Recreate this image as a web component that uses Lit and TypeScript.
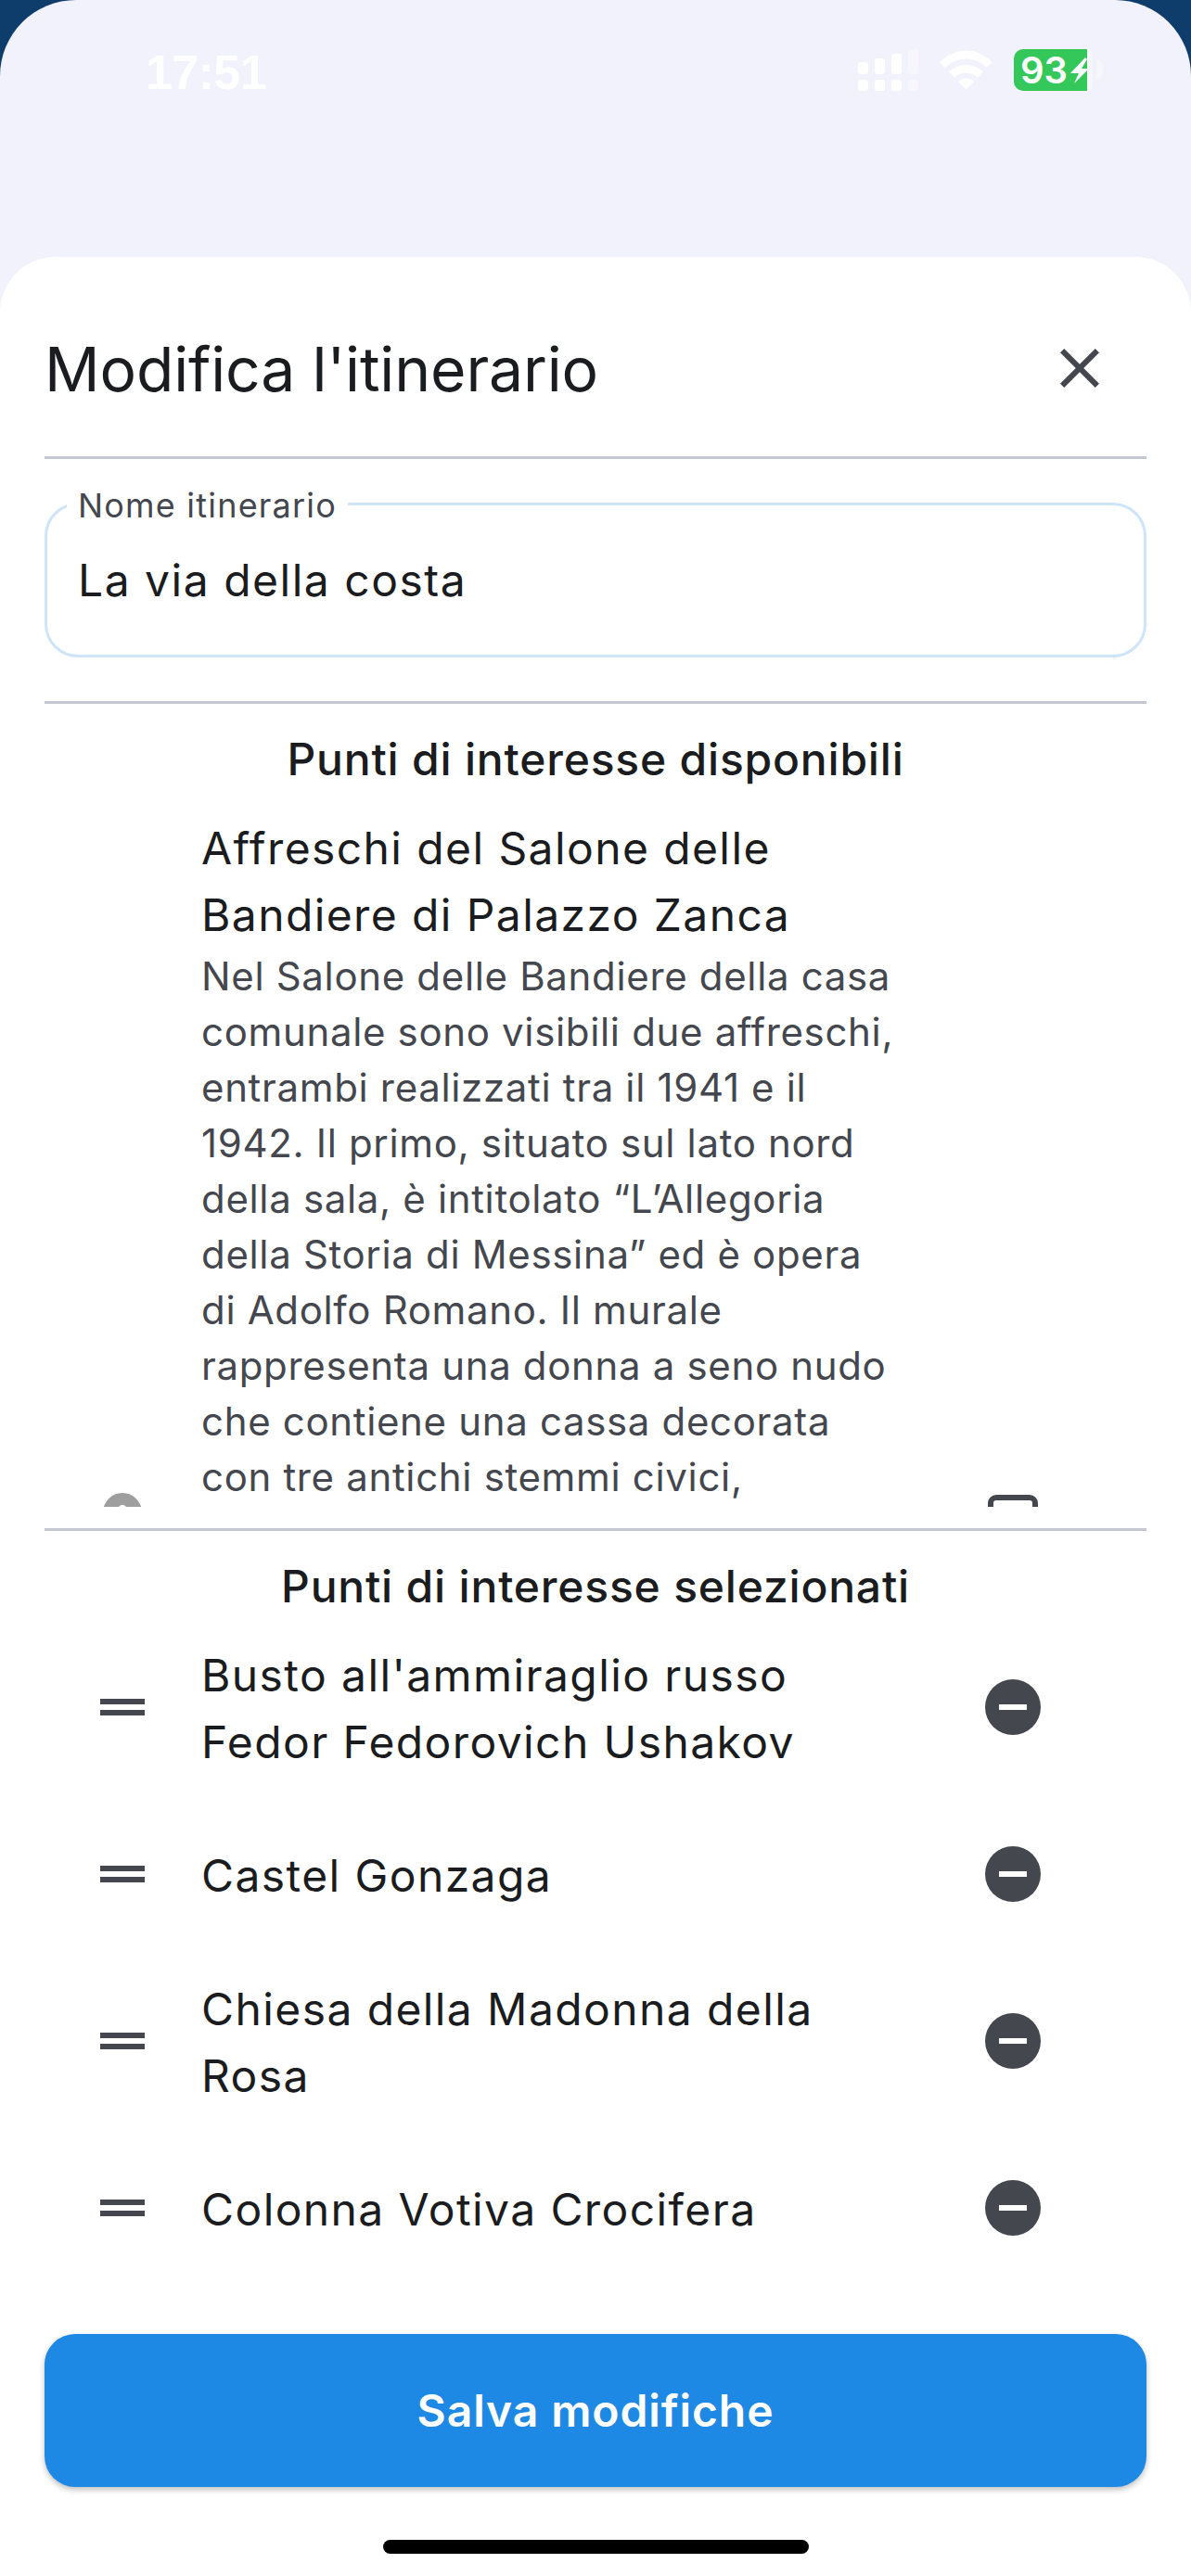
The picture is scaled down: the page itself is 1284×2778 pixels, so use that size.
import { LitElement, html, css, svg } from "lit";
import { customElement } from "lit/decorators.js";

const closeIcon = html`<svg class="close" viewBox="0 0 24 24"><path d="M19 6.41 17.59 5 12 10.59 6.41 5 5 6.41 10.59 12 5 17.59 6.41 19 12 13.41 17.59 19 19 17.59 13.41 12z" fill="#44474e"/></svg>`;
const handle = html`<svg class="icon" viewBox="0 0 60 60"><path d="M6 21h48v6H6zM6 33h48v6H6z" fill="#44474e"/></svg>`;
const minus = html`<svg class="icon" viewBox="0 0 60 60"><circle cx="30" cy="30" r="30" fill="#44474e"/><rect x="15" y="27" width="30" height="6" fill="#fff"/></svg>`;

const selected = [
  "Busto all'ammiraglio russo Fedor Fedorovich Ushakov",
  "Castel Gonzaga",
  "Chiesa della Madonna della Rosa",
  "Colonna Votiva Crocifera",
];

@customElement("app-root")
export class AppRoot extends LitElement {
  static styles = css`
    :host { display: block; width: 1284px; height: 2778px; background: #0f3d6b; font-family: Inter, "Liberation Sans", sans-serif; }
    .frame { position: relative; height: 2778px; background: #f1f2fb; border-radius: 82px 82px 0 0; overflow: hidden; display: flex; flex-direction: column; }
    .status { height: 277px; flex: none; position: relative; box-sizing: border-box; }
    .time { position: absolute; left: 157px; top: 48px; font-size: 52px; line-height: 60px; font-weight: 700; letter-spacing: -.6px; color: #fff; font-family: "Liberation Sans", sans-serif; opacity: .95; }
    .status svg { position: absolute; left: 920px; top: 48px; }
    .sheet { flex: 1; background: #fff; border-radius: 60px 60px 0 0; padding: 0 48px; display: flex; flex-direction: column; }
    .head { height: 215px; flex: none; display: flex; align-items: center; justify-content: space-between; box-sizing: border-box; padding-top: 25px; }
    .head h1 { margin: 2px 0 0; font-size: 66px; line-height: 84px; font-weight: 400; letter-spacing: -.15px; color: #1a1c20; }
    .close { width: 72px; height: 72px; margin-right: 36px; flex: none; }
    .rule { height: 3px; background: #c4c6d0; flex: none; }
    .field { position: relative; height: 167px; margin: 47px 0; box-sizing: border-box; border: 3px solid #cde4f9; border-radius: 36px; display: flex; align-items: center; padding-left: 33px; font-size: 48px; letter-spacing: 1.5px; color: #1a1c20; flex: none; }
    .field label { position: absolute; left: 21px; top: -24px; padding: 0 12px; background: #fff; font-size: 36px; line-height: 48px; letter-spacing: 1.2px; color: #44474e; }
    h2 { margin: 24px 0 0; font-size: 48px; line-height: 72px; font-weight: 500; letter-spacing: .8px; text-align: center; color: #1a1c20; flex: none; }
    .scroll { height: 770px; overflow: hidden; flex: none; margin-bottom: 23px; }
    .row { display: flex; align-items: center; padding: 24px 0; min-height: 168px; box-sizing: border-box; }
    .row.first { align-items: flex-start; }
    .icon { width: 60px; height: 60px; flex: none; }
    .lead { margin-left: 54px; margin-right: 55px; }
    .trail { margin-left: auto; margin-right: 114px; }
    .body { width: 755px; font-size: 48px; line-height: 72px; letter-spacing: 1.4px; color: #1a1c20; flex: none; }
    .list .body { padding-top: 2px; margin-bottom: -2px; }
    .desc { font-size: 42px; line-height: 60px; letter-spacing: .66px; color: #44474e; }
    .pin { margin-top: 731px; }
    .list { flex: none; margin-top: -2px; }
    .save { margin-top: 52px; height: 165px; border-radius: 33px; background: #1e88e5; color: #fff; font-size: 48px; font-weight: 600; letter-spacing: .9px; display: flex; align-items: center; justify-content: center; box-shadow: 0 3px 6px rgba(0,0,0,.25); flex: none; }
    .home { position: absolute; left: 413px; top: 2739px; width: 459px; height: 15px; border-radius: 8px; background: #000; }
  `;

  render() {
    return html`
      <div class="frame">
        <div class="status">
          <div class="time">17:51</div>
          <svg width="280" height="60" viewBox="920 48 280 60">
            ${svg`
            <g fill="#fff">
              <rect x="925" y="67" width="11" height="13" rx="3"/><rect x="943" y="63" width="11" height="17" rx="3"/><rect x="961" y="58" width="11" height="22" rx="3"/>
              <rect x="979" y="53" width="11" height="27" rx="3" opacity=".35"/>
              <rect x="925" y="86" width="11" height="12" rx="3"/><rect x="943" y="86" width="11" height="12" rx="3"/><rect x="961" y="86" width="11" height="12" rx="3"/>
              <rect x="979" y="86" width="11" height="12" rx="3" opacity=".35"/>
              <path d="M1013 67.500C1021 59 1031 54.500 1041.500 54.500S1062 59 1070 67.500L1064 73C1058 67 1050 63.500 1041.500 63.500S1025 67 1019 73Z"/>
              <path d="M1023 77.500C1028 72.500 1034.500 70 1041.500 70S1055 72.500 1060 77.500L1054 83.500C1050.500 80.500 1046 78.500 1041.500 78.500S1032.500 80.500 1029 83.500Z"/>
              <path d="M1033 88C1035.500 85.500 1038.500 84.500 1041.500 84.500S1047.500 85.500 1050 88L1041.500 96.500Z"/>
              <rect x="1165" y="53" width="13" height="45" rx="6" opacity=".4"/>
              <path d="M1182 64a6 9 0 0 1 0 22z" opacity=".4"/>
            </g>
            <path d="M1103 53H1172V98H1103A10 10 0 0 1 1093 88V63A10 10 0 0 1 1103 53Z" fill="#34c85a"/>
            <text x="1100" y="90" font-family="Inter, sans-serif" font-size="40" font-weight="600" fill="#fff">93</text>
            <path d="M1170 62 1154 79H1163L1158 90 1172 76V74H1166L1172 64Z" fill="#fff"/>
            `}
          </svg>
        </div>
        <div class="sheet">
          <div class="head"><h1>Modifica l'itinerario</h1>${closeIcon}</div>
          <div class="rule"></div>
          <div class="field"><label>Nome itinerario</label>La via della costa</div>
          <div class="rule"></div>
          <h2>Punti di interesse disponibili</h2>
          <div class="scroll">
            <div class="row first">
              <svg class="icon lead pin" viewBox="0 0 60 60"><circle cx="30" cy="21" r="21" fill="#9e9e9e"/><circle cx="30" cy="18" r="5" fill="#fff"/></svg>
              <div class="body">
                Affreschi del Salone delle Bandiere di Palazzo Zanca
                <div class="desc">Nel Salone delle Bandiere della casa comunale sono visibili due affreschi, entrambi realizzati tra il 1941 e il 1942. Il primo, situato sul lato nord della sala, è intitolato “L’Allegoria della Storia di Messina” ed è opera di Adolfo Romano. Il murale rappresenta una donna a seno nudo che contiene una cassa decorata con tre antichi stemmi civici,</div>
              </div>
              <svg class="icon trail pin" viewBox="0 0 60 60"><rect x="6" y="5" width="48" height="48" rx="6" fill="none" stroke="#44474e" stroke-width="6"/></svg>
            </div>
          </div>
          <div class="rule"></div>
          <h2>Punti di interesse selezionati</h2>
          <div class="list">
            ${selected.map((s) => html`<div class="row"><span class="icon lead">${handle}</span><div class="body">${s}</div><span class="icon trail">${minus}</span></div>`)}
          </div>
          <div class="save">Salva modifiche</div>
        </div>
        <div class="home"></div>
      </div>
    `;
  }
}
